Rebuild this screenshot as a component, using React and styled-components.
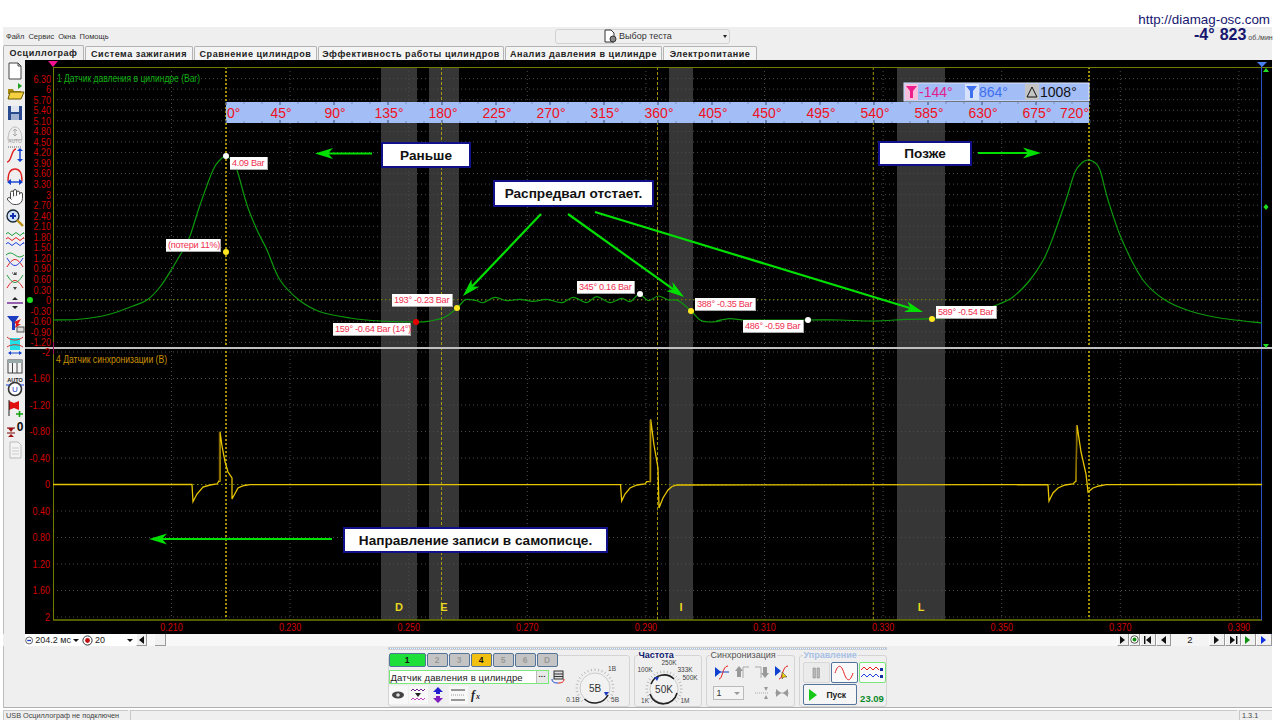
import styled, { createGlobalStyle } from "styled-components";
import { Hand } from "lucide-react";

const GlobalStyle = createGlobalStyle`
  html, body { margin: 0; padding: 0; background: #fff; }
  * { box-sizing: border-box; }
`;

const sans = `"Liberation Sans", Arial, sans-serif`;

const Page = styled.div`
  width: 1280px;
  height: 725px;
  overflow: hidden;
  background: #fff;
  font-family: ${sans};
  position: relative;
`;
const HeaderStrip = styled.div`
  height: 27px;
  padding: 12px 10px 0 0;
  text-align: right;
  font-size: 13.4px;
  line-height: 16px;
  color: #16166e;
`;
const Readout = styled.div`
  position: absolute;
  top: 26px;
  right: 7px;
  width: 79px;
  height: 17px;
  overflow: hidden;
  display: flex;
  align-items: baseline;
  white-space: nowrap;
  color: #16166e;
  font-weight: bold;
  font-size: 16px;
  line-height: 17px;
`;
const ReadoutValue = styled.span`
  margin-left: 5px;
`;
const ReadoutUnit = styled.span`
  font-size: 7px;
  font-weight: normal;
  color: #444;
  margin-left: 2px;
`;
const Frame = styled.div`
  width: 1269px;
  margin-left: 3px;
  background: #efefef;
`;
const MenuBar = styled.div`
  height: 18px;
  display: flex;
  align-items: center;
`;
const Menu = styled.div`
  flex: none;
  width: 106px;
  padding-left: 3px;
  display: flex;
  gap: 4px;
  font-size: 7.5px;
  color: #333;
  white-space: nowrap;
`;
const TestSelect = styled.div`
  margin-left: 446px;
  width: 175px;
  height: 15px;
  border: 1px solid #d2d2d2;
  border-radius: 3px;
  display: flex;
  align-items: center;
  font-size: 9px;
  color: #333;
  padding-left: 47px;
  gap: 2px;
`;
const SelectCaret = styled.span`
  margin-left: auto;
  margin-right: 2px;
  width: 0;
  height: 0;
  border-left: 2.5px solid transparent;
  border-right: 2.5px solid transparent;
  border-top: 3px solid #222;
`;
const TabRow = styled.div`
  height: 15px;
  display: flex;
  gap: 1px;
  align-items: flex-end;
`;
const Tab = styled.div`
  width: ${(p) => p.$w}px;
  height: ${(p) => (p.$active ? 15 : 14)}px;
  background: ${(p) => (p.$active ? "#efefef" : "#f4f4f4")};
  border: 1px solid #b4b4b4;
  border-bottom: none;
  border-radius: 2px 2px 0 0;
  font-size: 9px;
  font-weight: bold;
  letter-spacing: 0.55px;
  color: #222;
  display: flex;
  align-items: center;
  justify-content: center;
  white-space: nowrap;
`;
const Workspace = styled.div`
  height: 574px;
  display: flex;
`;
const Toolbar = styled.div`
  width: 22px;
  flex: none;
  border-left: 1px solid #bdbdbd;
  display: flex;
  flex-direction: column;
  align-items: center;
`;
const ToolButton = styled.div`
  height: 21.1px;
  width: 21px;
  flex: none;
  display: flex;
  align-items: center;
  justify-content: center;
`;
const Plot = styled.div`
  flex: 1;
  position: relative;
  background: #000;
  overflow: hidden;
`;
const PlotSvg = styled.svg`
  display: block;
  width: 100%;
  height: 100%;
  font-family: ${sans};
`;
const Note = styled.div`
  position: absolute;
  left: ${(p) => p.$x - 25}px;
  top: ${(p) => p.$y - 60}px;
  width: ${(p) => p.$w}px;
  height: ${(p) => p.$h}px;
  background: #fff;
  border: 2px solid #10108a;
  display: flex;
  align-items: center;
  justify-content: center;
  font-size: 13.6px;
  font-weight: bold;
  color: #111;
  white-space: nowrap;
`;
const Tag = styled.div`
  position: absolute;
  left: ${(p) => p.$x - 25}px;
  top: ${(p) => p.$y - 60}px;
  width: ${(p) => p.$w}px;
  height: 13px;
  background: #fff;
  border-right: 1px solid #aaa;
  border-bottom: 1px solid #aaa;
  padding-left: 2px;
  font-size: 9.2px;
  letter-spacing: -0.3px;
  line-height: 12px;
  color: #f03050;
  white-space: nowrap;
`;
const Dot = styled.div`
  position: absolute;
  left: ${(p) => p.$x - 25 - 3}px;
  top: ${(p) => p.$y - 60 - 3}px;
  width: 6px;
  height: 6px;
  border-radius: 50%;
  background: ${(p) => p.$color};
`;
const ScrollRow = styled.div`
  height: 12px;
  margin-left: 22px;
  display: flex;
  align-items: stretch;
  font-size: 9px;
  color: #222;
`;
const FieldBox = styled.div`
  width: ${(p) => p.$w}px;
  flex: none;
  background: #fff;
  display: flex;
  align-items: center;
  gap: 2px;
  padding: 0 3px 0 0;
  white-space: nowrap;
`;
const Caret = styled.span`
  margin-left: auto;
  width: 0;
  height: 0;
  border-left: 3px solid transparent;
  border-right: 3px solid transparent;
  border-top: 3px solid #111;
`;
const ScrollButton = styled.div`
  width: ${(p) => p.$w || 15}px;
  flex: none;
  background: #f1f1f1;
  border-right: 1px solid #999;
  border-bottom: 1px solid #999;
  border-left: 1px solid #fff;
  display: flex;
  align-items: center;
  justify-content: center;
`;
const Track = styled.div`
  flex: 1;
  background: #f8f8f8;
  padding-left: 8px;
  display: flex;
`;
const Thumb = styled.div`
  width: 11px;
  background: #f1f1f1;
  border-right: 1px solid #999;
  border-bottom: 1px solid #999;
`;
const PageNumber = styled.div`
  width: 38px;
  flex: none;
  text-align: center;
  line-height: 12px;
  font-size: 9.5px;
  background: #f4f4f4;
`;
const DockWrap = styled.div`
  height: 62px;
  padding-right: 2px;
  border-bottom: 1px solid #b0b0b0;
  border-left: 1px solid #bdbdbd;
  display: flex;
  justify-content: center;
`;
const Dock = styled.div`
  width: 501px;
  padding: 1px 1px 0;
  display: flex;
  flex-direction: column;
`;
const DockStrip = styled.div`
  height: 4px;
  border: 1px solid #cfcfcf;
  background: #fafafa;
  display: flex;
  align-items: center;
  justify-content: space-between;
`;
const StripDots = styled.div`
  flex: 1;
  border-top: 1px dotted #9cc0ee;
`;
const GroupRow = styled.div`
  margin-top: 5px;
  height: 52px;
  display: flex;
  gap: 4px;
`;
const Group = styled.div`
  width: ${(p) => p.$w}px;
  flex: none;
  position: relative;
  border: 1px solid #d4d4d4;
  border-radius: 3px;
  display: flex;
`;
const GroupTitle = styled.div`
  position: absolute;
  left: 3px;
  top: -5px;
  padding: 0 1px;
  background: #efefef;
  font-size: 9px;
  line-height: 9px;
  font-weight: ${(p) => (p.$strong ? "bold" : "normal")};
  color: ${(p) => p.$color};
  white-space: nowrap;
`;
const ChannelColumn = styled.div`
  width: 176px;
  flex: none;
  display: flex;
  flex-direction: column;
`;
const ChannelButtons = styled.div`
  margin-top: -3px;
  display: flex;
  gap: 1px;
`;
const ChannelButton = styled.div`
  width: ${(p) => (p.$wide ? 37 : 21)}px;
  height: 14px;
  border: 1px solid #54749a;
  border-radius: 2px;
  background: ${(p) => p.$bg};
  color: ${(p) => (p.$on ? "#111" : "#9a9a9a")};
  font-size: 8.5px;
  font-weight: bold;
  display: flex;
  align-items: center;
  justify-content: center;
`;
const ComboRow = styled.div`
  margin-top: 3px;
  display: flex;
  align-items: center;
  gap: 2px;
`;
const Combo = styled.div`
  width: 160px;
  height: 14px;
  border: 1px solid #78e878;
  background: #fff;
  display: flex;
  align-items: center;
  padding-left: 1px;
  font-size: 9.5px;
  letter-spacing: 0.15px;
  color: #222;
  white-space: nowrap;
`;
const ComboDots = styled.div`
  margin-left: auto;
  width: 12px;
  height: 12px;
  background: #e8e8e8;
  border-left: 1px solid #bbb;
  font-size: 8px;
  line-height: 8px;
  font-weight: bold;
  text-align: center;
`;
const IconRow = styled.div`
  margin-top: 2px;
  display: flex;
  gap: 1px;
`;
const IconCell = styled.div`
  width: 19px;
  height: 18px;
  flex: none;
  display: flex;
  align-items: center;
  justify-content: center;
  background: ${(p) => (p.$lit ? "#f8f8f8" : "transparent")};
`;
const SyncBody = styled.div`
  flex: 1;
  padding: 7px 0 0 5px;
  display: grid;
  grid-template-columns: repeat(4, 20px);
  grid-template-rows: 18px 18px;
  row-gap: 3px;
  justify-items: center;
  align-items: center;
`;
const SyncSelect = styled.div`
  grid-column: span 2;
  width: 31px;
  height: 14px;
  justify-self: start;
  margin-left: 1px;
  border: 1px solid #bbb;
  background: #f4f4f4;
  display: flex;
  align-items: center;
  padding: 0 3px;
  font-size: 9px;
  color: #333;
`;
const GrayCaret = styled(Caret)`
  border-top-color: #999;
`;
const ControlBody = styled.div`
  flex: 1;
  padding: 6px 0 0 3px;
  display: grid;
  grid-template-columns: 27px 27px 27px;
  grid-template-rows: 21px 21px;
  column-gap: 1px;
  row-gap: 1px;
`;
const ModeButton = styled.div`
  border: 1px solid ${(p) => p.$border};
  background: ${(p) => (p.$lit ? "#fafafa" : "#ebebeb")};
  border-radius: 2px;
  display: flex;
  align-items: center;
  justify-content: center;
`;
const StartButton = styled.div`
  grid-column: span 2;
  width: 54px;
  border: 1px solid #54749a;
  border-radius: 2px;
  background: #f6f6f6;
  display: flex;
  align-items: center;
  padding-left: 4px;
  gap: 9px;
  font-size: 8.5px;
  font-weight: bold;
  color: #222;
`;
const Counter = styled.div`
  align-self: end;
  text-align: center;
  padding-bottom: 1px;
  font-size: 9.5px;
  font-weight: bold;
  color: #0a8a2a;
`;
const StatusBar = styled.div`
  margin-top: 2px;
  height: 10px;
  display: flex;
  gap: 2px;
  font-size: 7.3px;
  line-height: 10px;
  color: #444;
`;
const StatusCell = styled.div`
  width: ${(p) => p.$w}px;
  flex: ${(p) => (p.$w ? "none" : 1)};
  border-top: 1px solid #c8c8c8;
  border-left: 1px solid #c8c8c8;
  padding-left: 2px;
  white-space: nowrap;
`;

/* ---------- chart data ---------- */
const zoomA = (pts) => pts.map(([x, y]) => [320 + x / 3, 260 + y / 3]);
const zoomB = (pts) => pts.map(([x, y]) => [680 + x / 3, 260 + y / 3]);

const pressure = [
  [53, 320], [77, 319.5], [100, 316.5], [117, 312], [133, 306], [147, 300], [160, 287], [173, 267],
  [183, 250], [190, 236], [200, 205], [213, 170], [220, 160], [226, 156], [232, 161], [237, 170],
  [247, 205], [257, 230], [267, 250], [280, 280], [299, 300], [320, 311.7], [350, 318], [380, 321],
  [416, 322], [430, 321], [445, 317], [457, 308], [464, 300.5],
  ...zoomA([
    [440, 118], [470, 122], [490, 128], [525, 112], [560, 122], [600, 118], [640, 124], [680, 118],
    [725, 128], [760, 112], [800, 128], [830, 110], [870, 128], [905, 115], [930, 125], [958, 103],
    [985, 122], [1015, 108], [1045, 120], [1075, 122], [1113, 153], [1140, 180], [1165, 186], [1200, 183],
  ]),
  ...zoomB([
    [110, 183], [150, 176], [190, 180], [280, 180], [385, 180], [480, 180], [580, 183], [680, 178],
    [756, 176], [800, 175], [860, 165], [950, 135], [1000, 110], [1050, 60], [1090, 0],
  ]),
  [1052, 240], [1066, 200], [1075, 172], [1083, 162], [1088, 160], [1094, 162], [1100, 170], [1108, 200],
  [1122, 240], [1143, 280], [1165, 300], [1190, 311], [1220, 318], [1262, 323],
];

// Catmull-Rom through every point, so the ripple keeps its height
const smooth = (pts) => {
  let d = `M${pts[0][0]} ${pts[0][1]}`;
  for (let i = 0; i < pts.length - 1; i++) {
    const p0 = pts[i - 1] || pts[i];
    const p1 = pts[i];
    const p2 = pts[i + 1];
    const p3 = pts[i + 2] || p2;
    const c1x = p1[0] + (p2[0] - p0[0]) / 6;
    const c1y = p1[1] + (p2[1] - p0[1]) / 6;
    const c2x = p2[0] - (p3[0] - p1[0]) / 6;
    const c2y = p2[1] - (p3[1] - p1[1]) / 6;
    d += `C${c1x} ${c1y} ${c2x} ${c2y} ${p2[0]} ${p2[1]}`;
  }
  return d;
};

const sync = [
  [53, 484.5], [192, 484.5], [193, 501.7], [197, 494], [203, 487], [210, 485], [217, 484], [219, 481],
  [220, 481], [220, 431.7], [222, 446], [225, 461.7], [228, 472], [232, 478], [232, 499], [238, 488],
  [244, 485.5], [250, 484.7],
  [620.5, 484.7], [621.7, 501], [625, 494], [630, 488], [637, 485], [645, 484], [646.7, 481.7], [650.5, 481.7],
  [650.7, 419.3], [654, 445], [658, 468], [659, 508], [663, 498], [668, 490], [672, 486.5], [677, 485],
  [1048, 484.7], [1049, 501], [1053, 493], [1058, 488], [1065, 485], [1073, 484], [1076, 481], [1077, 425],
  [1081, 452], [1086, 474], [1088, 492], [1093, 488], [1099, 486], [1106, 484.7], [1262, 484.5],
];

const upperLabels = ["6.30", "6", "5.70", "5.40", "5.10", "4.80", "4.50", "4.20", "3.90", "3.60", "3.30", "3", "2.70",
  "2.40", "2.10", "1.80", "1.50", "1.20", "0.90", "0.60", "0.30", "0", "-0.30", "-0.60", "-0.90", "-1.20"];
const lowerLabels = ["-2", "-1.60", "-1.20", "-0.80", "-0.40", "0", "0.40", "0.80", "1.20", "1.60", "2"];
const timeLabels = ["0.210", "0.230", "0.250", "0.270", "0.290", "0.310", "0.330", "0.350", "0.370", "0.390"];
const bands = [[381, 36, "D"], [429, 30, "E"], [669, 24, "I"], [897, 48, "L"]];
const cursors = [[226, 1.6], [441.5, 0.8], [657.5, 0.8], [873.3, 0.8], [1089, 1.6]];
const arrows = [
  [372, 153.5, 315, 153.5], [978, 153, 1041, 153], [332, 539, 149, 539],
  [541, 214, 463, 296], [568, 214, 684, 297], [595, 212, 923, 312],
];
const tags = [
  [230, 157, 38, "4.09 Bar"], [166, 239, 55, "(потери 11%)"], [333, 323, 78, "159° -0.64 Bar (14°)"],
  [392, 294, 61, "193° -0.23 Bar"], [577, 281, 58, "345° 0.16 Bar"], [695, 298, 61, "388° -0.35 Bar"],
  [743, 320, 61, "486° -0.59 Bar"], [936, 306, 61, "589° -0.54 Bar"],
];
const dots = [
  [226, 156, "#fff"], [226, 252, "#ffe820"], [416, 322, "#e80000"], [457, 307.5, "#ffe820"],
  [639.5, 294, "#fff"], [691, 311, "#ffe820"], [808, 320, "#fff"], [932, 318.5, "#ffe820"], [30, 300, "#20e020"],
];
const tabs = [
  ["Осциллограф", 81], ["Система зажигания", 108], ["Сравнение цилиндров", 123],
  ["Эффективность работы цилиндров", 186], ["Анализ давления в цилиндре", 157], ["Электропитание", 94],
];
const channels = [
  ["1", "#1fe03a", true, true], ["2", "#c4c4c4"], ["3", "#c4c4c4"], ["4", "#f2c010", false, true],
  ["5", "#c4c4c4"], ["6", "#c4c4c4"], ["D", "#c4c4c4"],
];

const Arrow = ({ x1, y1, x2, y2 }) => {
  const a = Math.atan2(y2 - y1, x2 - x1);
  const len = 18;
  const bx = x2 - len * Math.cos(a);
  const by = y2 - len * Math.sin(a);
  const nx = -Math.sin(a) * 5.5;
  const ny = Math.cos(a) * 5.5;
  const mx = x2 - (len - 5) * Math.cos(a);
  const my = y2 - (len - 5) * Math.sin(a);
  return (
    <g>
      <line x1={x1} y1={y1} x2={mx} y2={my} stroke="#00e000" strokeWidth="2.2" />
      <polygon points={`${x2},${y2} ${bx + nx},${by + ny} ${mx},${my} ${bx - nx},${by - ny}`} fill="#00e000" />
    </g>
  );
};

const AxisLabel = ({ x, y, anchor = "end", children }) => (
  <g transform={`translate(${x} ${y}) scale(0.78 1)`}>
    <text textAnchor={anchor} fontSize="11.5" fill="#d20000" dominantBaseline="central">{children}</text>
  </g>
);

const Funnel = ({ x, y, color }) => (
  <path d={`M${x} ${y}h11l-4 5v7h-3v-7z`} fill={color} />
);

const Chart = () => {
  const upperY = upperLabels.map((_, i) => 78.6 + i * 10.55);
  const lowerY = lowerLabels.map((_, i) => 352 + i * 26.5);
  const degrees = Array.from({ length: 49 }, (_, i) => i);
  return (
    <PlotSvg viewBox="25 60 1247 574">
      {bands.map(([x, w]) => <rect key={x} x={x} y="67" width={w} height="553" fill="#363636" />)}
      {[...upperY, ...lowerY].map((y) => (
        <line key={y} x1="53" x2="1262" y1={y} y2={y} stroke="#4c4c4c" strokeDasharray="1 3" />
      ))}
      {timeLabels.map((_, i) => (
        <line key={i} x1={171.5 + i * 118.6} x2={171.5 + i * 118.6} y1="67" y2="620" stroke="#4c4c4c" strokeDasharray="1 3" />
      ))}
      <line x1="53" x2="1262" y1="299.7" y2="299.7" stroke="#7a8400" strokeDasharray="1.5 2.5" />
      <line x1="53" x2="1262" y1="484.5" y2="484.5" stroke="#7a8400" strokeDasharray="1.5 2.5" />
      {cursors.map(([x, w]) => (
        <line key={x} x1={x} x2={x} y1="67" y2="620" stroke="#c8b400" strokeWidth={w} strokeDasharray={w > 1 ? "2 2" : "3 2"} />
      ))}
      <line x1="53" x2="1272" y1="67.5" y2="67.5" stroke="#6f7c00" />
      <line x1="53.5" x2="53.5" y1="67" y2="620" stroke="#6f7c00" />
      <line x1="53" x2="1262" y1="620" y2="620" stroke="#6f7c00" strokeWidth="1.4" />
      <line x1="1261.5" x2="1261.5" y1="62" y2="620" stroke="#2c50c8" />
      <line x1="25" x2="1272" y1="348" y2="348" stroke="#c0c0c0" strokeWidth="2" />
      <line x1="53.5" x2="53.5" y1="342" y2="354" stroke="#a01060" />

      {upperLabels.map((t, i) => <AxisLabel key={i} x="51" y={upperY[i]}>{t}</AxisLabel>)}
      {lowerLabels.map((t, i) => <AxisLabel key={i} x="50" y={lowerY[i]}>{t}</AxisLabel>)}
      {timeLabels.map((t, i) => <AxisLabel key={t} x={171.5 + i * 118.6} y="627.5" anchor="middle">{t}</AxisLabel>)}
      {bands.map(([x, w, t]) => (
        <text key={t} x={x + w / 2} y="611" textAnchor="middle" fontSize="11" fontWeight="bold" fill="#e8d820">{t}</text>
      ))}

      <text x="57" y="82" fontSize="10.5" fill="#10b010" textLength="143" lengthAdjust="spacingAndGlyphs">1 Датчик давления в цилиндре (Bar)</text>
      <text x="56" y="363" fontSize="10.5" fill="#c89000" textLength="111" lengthAdjust="spacingAndGlyphs">4 Датчик синхронизации (В)</text>

      <polyline points={sync.map((p) => p.join(",")).join(" ")} fill="none" stroke="#e6c400" strokeWidth="1.3" />
      <path d="M219.4 481V432M650 482V420M1076.4 482V426" stroke="#8a6c00" strokeWidth="1.2" />
      <path d={smooth(pressure)} fill="none" stroke="#0c9a0c" strokeWidth="1.2" />

      {/* degree ruler */}
      <rect x="226" y="102" width="863" height="21" fill="#a3bdf6" />
      {degrees.map((i) => (
        <g key={i} stroke={i % 3 === 0 ? "#3a4a70" : "#7d8db5"}>
          <line x1={226 + i * 18} x2={226 + i * 18} y1="102" y2={i % 3 === 0 ? 105 : 104} />
          <line x1={226 + i * 18} x2={226 + i * 18} y1={i % 3 === 0 ? 120 : 121} y2="123" />
        </g>
      ))}
      {Array.from({ length: 17 }, (_, i) => i).map((i) => (
        <text
          key={i}
          x={i === 0 ? 227 : i === 16 ? 1089 : 227 + i * 54}
          y="117.5"
          fontSize="14"
          fill="#f01020"
          textAnchor={i === 0 ? "start" : i === 16 ? "end" : "middle"}
        >
          {i * 45}°
        </text>
      ))}

      {/* cursor readout */}
      <rect x="904" y="83" width="185" height="18" fill="#a3bdf6" stroke="#dfe8fb" />
      <rect x="905" y="84" width="13" height="16" fill="#f8c0dc" />
      <Funnel x={906} y={86} color="#ee1e8c" />
      <text x="919" y="97" fontSize="14" fill="#e0208c">-144°</text>
      <rect x="965" y="84" width="14" height="16" fill="#d6e2fb" />
      <Funnel x={966} y={86} color="#3e70f0" />
      <text x="979" y="97" fontSize="14" fill="#3e70f0">864°</text>
      <rect x="1025" y="84" width="14" height="16" fill="#c4c4c4" />
      <path d="M1032 87l5 10h-10z" fill="none" stroke="#111" />
      <text x="1040" y="97" fontSize="14" fill="#111">1008°</text>

      {arrows.map(([x1, y1, x2, y2]) => <Arrow key={x2} x1={x1} y1={y1} x2={x2} y2={y2} />)}

      <path d="M48 61h10l-5 6z" fill="#f01090" />
      <path d="M1257 62h10l-5 5z" fill="#4a80f0" />
      <path d="M1263 72l3-4 3 4z" fill="#20e020" />
      <path d="M1263 344l3 4 3-4z" fill="#20e020" />
      <path d="M1266 204l2.5 3-2.5 3-2.5-3z" fill="#20e020" />
    </PlotSvg>
  );
};

/* ---------- small drawn icons ---------- */
const Svg = ({ w = 20, h = 20, children }) => <svg width={w} height={h} viewBox={`0 0 ${w} ${h}`}>{children}</svg>;

const toolIcons = [
  <Svg key="new"><path d="M4 2h9l3 3v13H4z" fill="#fff" stroke="#444" /><path d="M13 2v3h3" fill="none" stroke="#444" /></Svg>,
  <Svg key="open"><path d="M3 7h5l1 2h7v3H3z" fill="#a88a10" /><path d="M3 17l2-7h14l-3 7z" fill="#f4d040" stroke="#6a5a00" /><path d="M13 1l4 3-4 3z" fill="#20a020" /></Svg>,
  <Svg key="save"><rect x="3" y="3" width="14" height="14" fill="#2a4a90" /><rect x="6" y="3" width="8" height="6" fill="#dfe6f2" /><rect x="6" y="11" width="8" height="6" fill="#9fb0d0" /></Svg>,
  <Svg key="auto"><path d="M3 16c0-8 3-13 7-13s7 5 7 13z" fill="none" stroke="#bbb" /><path d="M10 5v7M8 7l2-2 2 2M8 10l2 2 2-2" fill="none" stroke="#aaa" /><text x="10" y="18.5" fontSize="5" fill="#999" textAnchor="middle">AUTO</text></Svg>,
  <Svg key="yscale"><path d="M2 17c5 0 4-13 9-13" fill="none" stroke="#e02020" strokeWidth="1.4" /><path d="M3 2h14" stroke="#666" strokeDasharray="1 1" /><path d="M15 4v12" stroke="#1040d0" strokeWidth="1.4" /><path d="M12 6l3-3 3 3zM12 14l3 3 3-3z" fill="#1040d0" /></Svg>,
  <Svg key="xscale"><path d="M3 15c0-8 3-12 7-12s7 4 7 12" fill="none" stroke="#e02020" strokeWidth="1.4" /><path d="M4 16h12" stroke="#1040d0" strokeWidth="1.4" /><path d="M6 13l-4 3 4 3zM14 13l4 3-4 3z" fill="#1040d0" /></Svg>,
  <Hand key="hand" size={18} strokeWidth={1.2} color="#333" fill="#fff" />,
  <Svg key="zoom"><circle cx="8" cy="8" r="6" fill="#cfe0f6" stroke="#123" strokeWidth="1.3" /><path d="M5 8h6M8 5v6" stroke="#1030b0" strokeWidth="2" /><path d="M12 12l6 6" stroke="#b89010" strokeWidth="2.4" /></Svg>,
  <Svg key="waves"><path d="M1 5q2-3 4 0t4 0 4 0 4 0 2 0" fill="none" stroke="#20a040" /><path d="M1 10q2-3 4 0t4 0 4 0 4 0 2 0" fill="none" stroke="#e02020" /><path d="M1 15q2-3 4 0t4 0 4 0 4 0 2 0" fill="none" stroke="#2040e0" /></Svg>,
  <Svg key="cross"><path d="M1 5q4-4 9 0t9 0" fill="none" stroke="#20a040" /><path d="M2 17c6-10 10-10 16 0" fill="none" stroke="#e02020" /><path d="M2 8c6 10 10 10 16 0" fill="none" stroke="#2040e0" /></Svg>,
  <Svg key="dome"><path d="M7 2h6" stroke="#444" strokeDasharray="1 1" /><path d="M2 17c6-10 10-10 16 0" fill="none" stroke="#e02020" /><path d="M2 4c6 10 10 10 16 0" fill="none" stroke="#20a040" /><path d="M8 4l2-3 2 3zM8 16l2 3 2-3z" fill="#444" /></Svg>,
  <Svg key="line"><path d="M2 10h16" stroke="#702090" strokeWidth="1.4" /><path d="M7 7l3-3 3 3zM7 13l3 3 3-3z" fill="#222" /></Svg>,
  <Svg key="filter"><path d="M2 2h12l-4 6v8H7V8z" fill="#1a3ac0" /><path d="M9 8l7-3-3 5 3 0-6 4 1-4z" fill="#e01818" /><rect x="12" y="13" width="7" height="5" fill="#ddd" stroke="#555" /></Svg>,
  <Svg key="cyan"><rect x="5" y="3" width="10" height="12" fill="#20e0e8" /><path d="M2 2c4 4 12 4 16 0M2 12c4-3 12-3 16 0" fill="none" stroke="#d03030" /><path d="M5 18h10" stroke="#1040d0" /><path d="M6 16l-3 2 3 2zM14 16l3 2-3 2z" fill="#1040d0" /></Svg>,
  <Svg key="table"><rect x="3" y="4" width="14" height="13" fill="#f4f4f4" stroke="#444" /><rect x="3" y="4" width="14" height="3" fill="#9aa" /><path d="M7.5 7v10M12 7v10" stroke="#444" /></Svg>,
  <Svg key="autou"><text x="10" y="5" fontSize="5.5" fontWeight="bold" fill="#222" textAnchor="middle">AUTO</text><circle cx="10" cy="12" r="6.5" fill="#fff" stroke="#333" strokeWidth="1.6" /><text x="10" y="15" fontSize="8" fill="#1a3ac0" textAnchor="middle">U</text><path d="M1 8h4M15 8h4" stroke="#1040d0" /></Svg>,
  <Svg key="flag"><path d="M4 3l5 2 5-2v9l-5-2-5 2z" fill="#e01010" /><path d="M4 2v16" stroke="#222" /><path d="M11 16h7M14.5 13v6" stroke="#10a010" strokeWidth="1.6" /></Svg>,
  <Svg key="zero"><path d="M2 9h8M2 14h8" stroke="#700" /><path d="M3 9l3 4 3-4zM3 18l3-3 3 3z" fill="#a01010" /><text x="15" y="12" fontSize="12" fill="#111" textAnchor="middle" fontWeight="bold">0</text></Svg>,
  <Svg key="report"><path d="M5 2h8l3 3v13H5z" fill="#f4f4f4" stroke="#bbb" /><path d="M7 8h7M7 11h7M7 14h7" stroke="#ccc" /></Svg>,
];

const Tri = ({ dir = "right", color = "#111", bar }) => (
  <svg width="9" height="8" viewBox="0 0 9 8">
    <path d={dir === "right" ? "M1 0l5 4-5 4z" : "M7 0L2 4l5 4z"} fill={color} />
    {bar && <rect x={dir === "right" ? 7 : 0} y="0" width="1.4" height="8" fill={color} />}
  </svg>
);
const Target = ({ color, bar }) => (
  <svg width="11" height="11" viewBox="0 0 11 11">
    <circle cx="5.5" cy="5.5" r="4.6" fill="#fff" stroke="#333" />
    {bar ? <rect x="3" y="4.6" width="5" height="1.8" fill={color} /> : <circle cx="5.5" cy="5.5" r="2.4" fill={color} />}
  </svg>
);

const KnobSvg = styled.svg`
  flex: none;
`;

const Knob = ({ width, cx, cy, r, center, labels, marker, sweep }) => {
  const ticks = Array.from({ length: 25 }, (_, i) => -135 + i * 11.25);
  const rad = (a) => ((a - 90) * Math.PI) / 180;
  return (
    <KnobSvg width={width} height="50" viewBox={`0 0 ${width} 50`}>
      {ticks.map((a) => (
        <line
          key={a}
          x1={cx + (r + 2) * Math.cos(rad(a))}
          y1={cy + (r + 2) * Math.sin(rad(a))}
          x2={cx + (r + 4.5) * Math.cos(rad(a))}
          y2={cy + (r + 4.5) * Math.sin(rad(a))}
          stroke="#bbb"
        />
      ))}
      <circle cx={cx} cy={cy} r={r} fill="#f2f2f2" stroke="#ccc" />
      <path d={sweep} fill="none" stroke="#222" strokeWidth="1.6" />
      <path d={marker} fill="#1a3ac0" />
      <text x={cx} y={cy + 3.5} fontSize="10" textAnchor="middle" fill="#333">{center}</text>
      {labels.map(([t, x, y]) => (
        <text key={t} x={x} y={y} fontSize="6.5" textAnchor="middle" fill="#444">{t}</text>
      ))}
    </KnobSvg>
  );
};

const ControlDock = () => (
  <Dock>
    <DockStrip><StripDots /></DockStrip>
    <GroupRow>
      <Group $w={242}>
        <ChannelColumn>
          <ChannelButtons>
            {channels.map(([t, bg, wide, on]) => (
              <ChannelButton key={t} $bg={bg} $wide={wide} $on={on}>{t}</ChannelButton>
            ))}
          </ChannelButtons>
          <ComboRow>
            <Combo>Датчик давления в цилиндре<ComboDots>...</ComboDots></Combo>
            <Svg w={14} h={14}>
              <rect x="3" y="1" width="9" height="8" fill="#ddd" stroke="#333" />
              <path d="M3 4h9M3 6.5h9" stroke="#333" />
              <path d="M1 9c0 4 4 4 6 4" fill="none" stroke="#1040d0" />
              <path d="M13 9c0 4-4 4-6 4" fill="none" stroke="#e01010" />
            </Svg>
          </ComboRow>
          <IconRow>
            <IconCell $lit>
              <Svg w={14} h={12}><ellipse cx="7" cy="6" rx="6" ry="3.4" fill="#444" /><circle cx="7" cy="6" r="1.8" fill="#ddd" /></Svg>
            </IconCell>
            <IconCell $lit>
              <Svg w={16} h={14}>
                <path d="M1 3l2-2 2 2 2-2 2 2 2-2 2 2 2-2" fill="none" stroke="#702090" />
                <path d="M1 12l2-2 2 2 2-2 2 2 2-2 2 2 2-2" fill="none" stroke="#c040c0" />
                <path d="M5 5h6L8 9z" fill="#222" />
              </Svg>
            </IconCell>
            <IconCell>
              <Svg w={14} h={16}>
                <path d="M7 0l5 5H9v2H5V5H2z" fill="#2020d0" />
                <path d="M7 16l5-5H9V9H5v2H2z" fill="#8020c0" />
              </Svg>
            </IconCell>
            <IconCell $lit>
              <Svg w={16} h={14}>
                <path d="M1 2h14M1 12h14" stroke="#777" strokeWidth="1.4" />
                <path d="M1 7h14" stroke="#999" strokeDasharray="1 1" />
              </Svg>
            </IconCell>
            <IconCell>
              <Svg w={16} h={14}>
                <text x="1" y="11" fontSize="12" fontFamily="Liberation Serif" fontStyle="italic" fontWeight="bold" fill="#222">f</text>
                <text x="6" y="11" fontSize="8" fontFamily="Liberation Serif" fontStyle="italic" fontWeight="bold" fill="#222">x</text>
              </Svg>
            </IconCell>
          </IconRow>
        </ChannelColumn>
        <Knob
          width={62}
          cx={30}
          cy={32}
          r={15}
          center="5В"
          sweep="M19.5 43A15 15 0 0 0 43 39"
          marker="M39 36h5l-3 4z"
          labels={[["0.1В", 8, 46], ["5В", 50, 46], ["1В", 47, 15]]}
        />
      </Group>
      <Group $w={68}>
        <GroupTitle $strong $color="#10206e">Частота</GroupTitle>
        <Knob
          width={66}
          cx={29}
          cy={33}
          r={14}
          center="50K"
          sweep="M16 28A14 14 0 0 1 39 23M15 38A14 14 0 0 0 42 37"
          marker="M19 21h5l-2 4z"
          labels={[["100K", 10, 16], ["250K", 34, 9], ["333K", 50, 16], ["500K", 55, 24], ["1K", 10, 47], ["1M", 50, 47]]}
        />
      </Group>
      <Group $w={89}>
        <GroupTitle $color="#555">Синхронизация</GroupTitle>
        <SyncBody>
          <Svg w={16} h={16}>
            <path d="M1 8h14" stroke="#1040d0" />
            <path d="M1 3l6 5-6 5z" fill="#1040d0" />
            <path d="M5 15c4 0 3-13 9-13" fill="none" stroke="#e82020" />
          </Svg>
          <Svg w={16} h={14}>
            <path d="M9 2h6M9 2v11" fill="none" stroke="#aaa" />
            <path d="M5 1l4 5H7v6H3V6H1z" fill="#999" />
          </Svg>
          <Svg w={16} h={14}>
            <path d="M1 2h6v11" fill="none" stroke="#aaa" />
            <path d="M11 13l4-5h-2V2H9v6H7z" fill="#999" />
          </Svg>
          <Svg w={16} h={16}>
            <path d="M1 2l6 5-6 5z" fill="#1040d0" />
            <path d="M5 15c4 0 3-13 9-13" fill="none" stroke="#e82020" />
            <path d="M8 8v7l2-2 3 0z" fill="#f0d000" stroke="#333" strokeWidth="0.5" />
          </Svg>
          <SyncSelect>1<GrayCaret /></SyncSelect>
          <Svg w={16} h={14}>
            <path d="M1 7h14" stroke="#aaa" strokeDasharray="1 1" />
            <path d="M10 1h4l-2 4zM10 13h4l-2-4z" fill="#999" />
          </Svg>
          <Svg w={16} h={12}>
            <path d="M1 6h14" stroke="#aaa" />
            <path d="M2 2l5 4-5 4zM14 2L9 6l5 4z" fill="#999" />
          </Svg>
        </SyncBody>
      </Group>
      <Group $w={88}>
        <GroupTitle $strong $color="#a8c0e4">Управление</GroupTitle>
        <ControlBody>
          <ModeButton $border="#d8d8d8">
            <Svg w={12} h={12}><path d="M3 1h2.4v10H3zM7 1h2.4v10H7z" fill="#bbb" stroke="#888" strokeWidth="0.6" /></Svg>
          </ModeButton>
          <ModeButton $border="#54749a" $lit>
            <Svg w={22} h={16}><path d="M2 8c3-9 6-9 9 0s6 9 9 0" fill="none" stroke="#e82020" /></Svg>
          </ModeButton>
          <ModeButton $border="#78e878" $lit>
            <Svg w={24} h={16}>
              <path d="M1 5l3-3 3 3 3-3 3 3 3-3 3 3" fill="none" stroke="#e82020" />
              <path d="M1 12l3-3 3 3 3-3 3 3 3-3 3 3" fill="none" stroke="#2040e0" />
              <path d="M20 3h3v3h-3zM20 10h3v3h-3z" fill="#1030a0" />
            </Svg>
          </ModeButton>
          <StartButton>
            <Svg w={10} h={14}><path d="M1 1l8 6-8 6z" fill="#18c818" /></Svg>
            Пуск
          </StartButton>
          <Counter>23.09</Counter>
        </ControlBody>
      </Group>
    </GroupRow>
  </Dock>
);

export default function App() {
  return (
    <Page>
      <GlobalStyle />
      <HeaderStrip>http://diamag-osc.com</HeaderStrip>
      <Readout>
        <span>-4°</span>
        <ReadoutValue>823</ReadoutValue>
        <ReadoutUnit>об./мин</ReadoutUnit>
      </Readout>
      <Frame>
        <MenuBar>
          <Menu><span>Файл</span><span>Сервис</span><span>Окна</span><span>Помощь</span></Menu>
          <TestSelect>
            <Svg w={14} h={14}>
              <path d="M2 1h6l3 3v9H2z" fill="#fff" stroke="#333" />
              <circle cx="10" cy="10" r="3" fill="#888" stroke="#333" />
            </Svg>
            Выбор теста
            <SelectCaret />
          </TestSelect>
        </MenuBar>
        <TabRow>
          {tabs.map(([t, w], i) => <Tab key={t} $w={w} $active={i === 0}>{t}</Tab>)}
        </TabRow>
        <Workspace>
          <Toolbar>
            {toolIcons.map((icon, i) => <ToolButton key={i}>{icon}</ToolButton>)}
          </Toolbar>
          <Plot>
            <Chart />
            {dots.map(([x, y, c]) => <Dot key={`${x}-${y}`} $x={x} $y={y} $color={c} />)}
            {tags.map(([x, y, w, t]) => <Tag key={t} $x={x} $y={y} $w={w}>{t}</Tag>)}
            <Note $x={381} $y={142} $w={90} $h={26}>Раньше</Note>
            <Note $x={878} $y={141} $w={94} $h={25}>Позже</Note>
            <Note $x={493} $y={180} $w={161} $h={27}>Распредвал отстает.</Note>
            <Note $x={343} $y={527} $w={265} $h={26}>Направление записи в самописце.</Note>
          </Plot>
        </Workspace>
        <ScrollRow>
          <FieldBox $w={57}>
            <Target color="#1a3ac0" bar />
            204.2 мс
            <Caret />
          </FieldBox>
          <FieldBox $w={54}>
            <Target color="#c01010" />
            20
            <Caret />
          </FieldBox>
          <ScrollButton $w={11}><Tri dir="left" /></ScrollButton>
          <Track><Thumb /></Track>
          <ScrollButton $w={12}><Tri /></ScrollButton>
          <ScrollButton $w={11}><Target color="#109010" /></ScrollButton>
          <ScrollButton $w={16}><Tri dir="left" bar /></ScrollButton>
          <ScrollButton $w={15}><Tri dir="left" /></ScrollButton>
          <PageNumber>2</PageNumber>
          <ScrollButton $w={16}><Tri /></ScrollButton>
          <ScrollButton $w={16}><Tri bar /></ScrollButton>
          <ScrollButton $w={15}><Tri color="#109010" /></ScrollButton>
          <ScrollButton $w={16}><Tri color="#1030e0" /></ScrollButton>
        </ScrollRow>
        <DockWrap><ControlDock /></DockWrap>
      </Frame>
      <Frame as={StatusBar}>
        <StatusCell $w={125}>USB Осциллограф не подключен</StatusCell>
        <StatusCell />
        <StatusCell $w={33}>1.3.1</StatusCell>
      </Frame>
    </Page>
  );
}
